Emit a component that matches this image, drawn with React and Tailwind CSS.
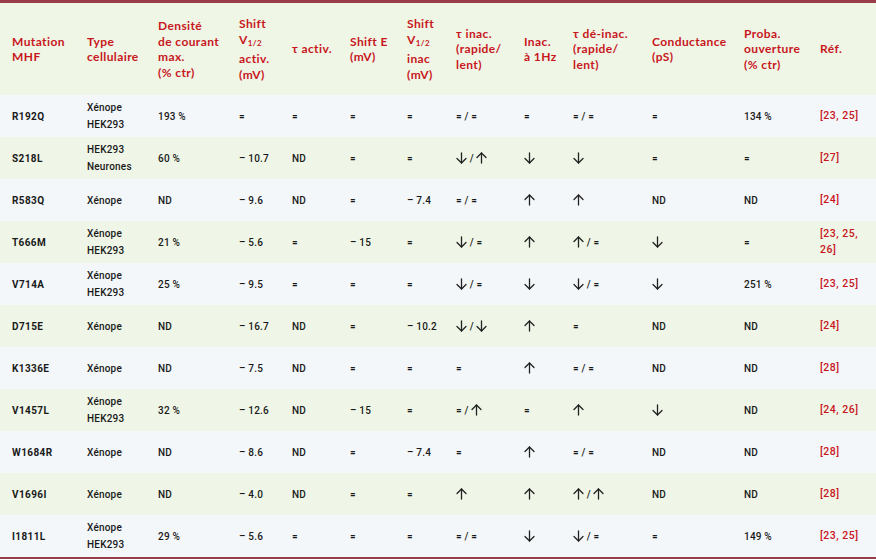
import React from "react";

const COLS = "grid-cols-[75px_71px_81px_53px_58px_57px_49px_68px_49px_79px_92px_76px_56px]";

const headers = [
  ["Mutation", "MHF"],
  ["Type", "cellulaire"],
  ["Densité", "de courant", "max.", "(% ctr)"],
  ["Shift", "V12", "activ.", "(mV)"],
  ["τ activ."],
  ["Shift E", "(mV)"],
  ["Shift", "V12", "inac", "(mV)"],
  ["τ inac.", "(rapide/", "lent)"],
  ["Inac.", "à 1Hz"],
  ["τ dé-inac.", "(rapide/", "lent)"],
  ["Conductance", "(pS)"],
  ["Proba.", "ouverture", "(% ctr)"],
  ["Réf."],
];

const rows = [
  ["R192Q", ["Xénope", "HEK293"], "193 %", "=", "=", "=", "=", "= / =", "=", "= / =", "=", "134 %", ["[23, 25]"]],
  ["S218L", ["HEK293", "Neurones"], "60 %", "– 10.7", "ND", "=", "=", "↓ / ↑", "↓", "↓", "=", "=", ["[27]"]],
  ["R583Q", ["Xénope"], "ND", "– 9.6", "ND", "=", "– 7.4", "= / =", "↑", "↑", "ND", "ND", ["[24]"]],
  ["T666M", ["Xénope", "HEK293"], "21 %", "– 5.6", "=", "– 15", "=", "↓ / =", "↑", "↑ / =", "↓", "=", ["[23, 25,", "26]"]],
  ["V714A", ["Xénope", "HEK293"], "25 %", "– 9.5", "=", "=", "=", "↓ / =", "↓", "↓ / =", "↓", "251 %", ["[23, 25]"]],
  ["D715E", ["Xénope"], "ND", "– 16.7", "ND", "=", "– 10.2", "↓ / ↓", "↑", "=", "ND", "ND", ["[24]"]],
  ["K1336E", ["Xénope"], "ND", "– 7.5", "ND", "=", "=", "=", "↑", "= / =", "ND", "ND", ["[28]"]],
  ["V1457L", ["Xénope", "HEK293"], "32 %", "– 12.6", "ND", "– 15", "=", "= / ↑", "=", "↑", "↓", "ND", ["[24, 26]"]],
  ["W1684R", ["Xénope"], "ND", "– 8.6", "ND", "=", "– 7.4", "=", "↑", "= / =", "ND", "ND", ["[28]"]],
  ["V1696I", ["Xénope"], "ND", "– 4.0", "ND", "=", "=", "↑", "↑", "↑ / ↑", "ND", "ND", ["[28]"]],
  ["I1811L", ["Xénope", "HEK293"], "29 %", "– 5.6", "=", "=", "=", "= / =", "↓", "↓ / =", "=", "149 %", ["[23, 25]"]],
];

function HeaderLine({ text }) {
  if (text === "V12") {
    return (
      <div>
        V<span className="text-[8px] align-[-2px]">1/2</span>
      </div>
    );
  }
  return <div>{text}</div>;
}

function Arrow({ up }) {
  return (
    <svg
      width="11"
      height="12"
      viewBox="0 0 11 12"
      className="inline-block align-[-2px]"
      fill="none"
      stroke="#222"
      strokeWidth="1.3"
      strokeLinecap="round"
      strokeLinejoin="round"
    >
      {up ? (
        <>
          <path d="M5.5 11V1" />
          <path d="M1 5.5L5.5 1L10 5.5" />
        </>
      ) : (
        <>
          <path d="M5.5 1V11" />
          <path d="M1 6.5L5.5 11L10 6.5" />
        </>
      )}
    </svg>
  );
}

function Value({ text }) {
  const parts = text.split(/([↓↑])/);
  return (
    <span>
      {parts.map((p, i) =>
        p === "↓" ? (
          <Arrow key={i} />
        ) : p === "↑" ? (
          <Arrow key={i} up />
        ) : (
          <span key={i}>{p}</span>
        )
      )}
    </span>
  );
}

export default function App() {
  return (
    <div className="w-[876px] h-[559px] overflow-hidden bg-white">
      <div className="border-t-[3px] border-b-[3px] border-[#9a3c4a]">
        <div
          className={`grid ${COLS} pl-[12px] h-[92px] bg-[#eff6e6] items-center text-[#c8161d] font-['Lato',sans-serif] font-bold text-[12px] leading-[15.5px] tracking-[0.4px]`}
        >
          {headers.map((h, i) => (
            <div key={i}>
              {h.map((t, j) => (
                <HeaderLine key={j} text={t} />
              ))}
            </div>
          ))}
        </div>
        {rows.map((r, ri) => (
          <div
            key={ri}
            className={`grid ${COLS} pl-[12px] h-[42px] items-center text-[#1a1a1a] font-['Roboto',sans-serif] font-medium text-[10px] leading-[17px] tracking-[0.2px] ${
              ri % 2 === 0 ? "bg-[#f3f7f9]" : "bg-[#eff6e7]"
            }`}
          >
            {r.map((c, ci) => {
              if (ci === 0) {
                return (
                  <div key={ci} className="font-bold tracking-[0.4px]">
                    {c}
                  </div>
                );
              }
              if (ci === 1) {
                return (
                  <div key={ci}>
                    {c.map((t, k) => (
                      <div key={k}>{t}</div>
                    ))}
                  </div>
                );
              }
              if (ci === 12) {
                return (
                  <div key={ci} className="text-[#c8161d] text-[10.5px] leading-[16px] tracking-[0.5px]">
                    {c.map((t, k) => (
                      <div key={k}>{t}</div>
                    ))}
                  </div>
                );
              }
              return (
                <div key={ci}>
                  <Value text={c} />
                </div>
              );
            })}
          </div>
        ))}
      </div>
    </div>
  );
}
